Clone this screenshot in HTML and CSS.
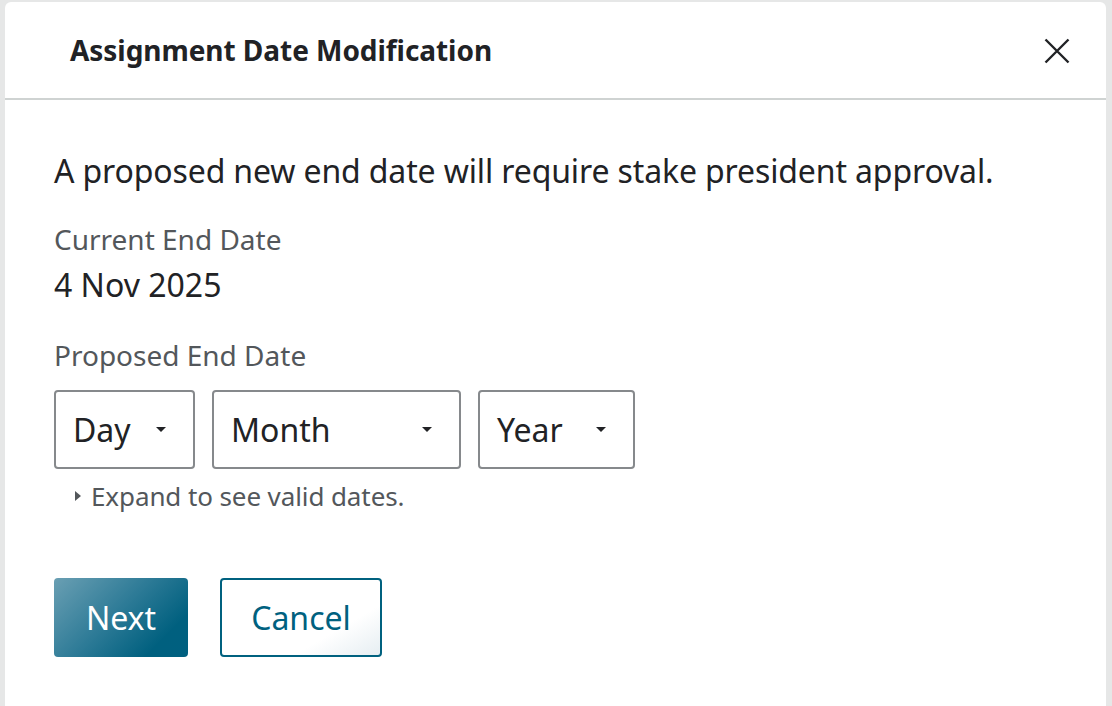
FILE: index.html
```html
<!DOCTYPE html>
<html lang="en">
<head>
<meta charset="utf-8">
<title>Assignment Date Modification</title>
<link rel="stylesheet" href="styles.css">
</head>
<body>
<div class="dialog">
  <header class="dialog-header">
    <h1 class="dialog-title">Assignment Date Modification</h1>
    <button class="close-btn" aria-label="Close">
      <svg width="26" height="26" viewBox="0 0 26 26"><path d="M1.5 1.5 L24.5 24.5 M24.5 1.5 L1.5 24.5" stroke="#212225" stroke-width="2.4" fill="none"/></svg>
    </button>
  </header>
  <main class="dialog-body">
    <p class="intro">A proposed new end date will require stake president approval.</p>
    <div class="field-label current">Current End Date</div>
    <div class="field-value">4 Nov 2025</div>
    <div class="field-label proposed">Proposed End Date</div>
    <div class="selects">
      <div class="select sel-day"><span>Day</span><span class="caret"></span></div>
      <div class="select sel-month"><span>Month</span><span class="caret"></span></div>
      <div class="select sel-year"><span>Year</span><span class="caret"></span></div>
    </div>
    <div class="expand"><span class="tri"></span>Expand to see valid dates.</div>
    <div class="actions">
      <button class="btn btn-primary">Next</button>
      <button class="btn btn-secondary">Cancel</button>
    </div>
  </main>
</div>
</body>
</html>
```
FILE: styles.css
```css
html, body {
  margin: 0;
  padding: 0;
  height: 100%;
  overflow: hidden;
}
body {
  background: #e6e7e7;
  font-family: "Noto Sans", "Open Sans", sans-serif;
  color: #212225;
}
.dialog {
  margin: 2px 6px 0 5px;
  background: #fff;
  border-radius: 6px 6px 0 0;
  height: 720px;
}
.dialog-header {
  height: 96px;
  border-bottom: 2px solid #cfd3d2;
  display: flex;
  align-items: center;
  justify-content: space-between;
  padding: 0 36px 0 65px;
}
.dialog-title {
  margin: 0;
  font-size: 28px;
  line-height: 38px;
  font-weight: 700;
  letter-spacing: -0.05px;
}
.close-btn {
  background: none;
  border: 0;
  padding: 0;
  width: 26px;
  height: 26px;
  display: flex;
  margin-top: 1px;
}
.dialog-body {
  padding: 49px 49px 0;
}
.intro {
  margin: 0;
  font-size: 32px;
  line-height: 44px;
  letter-spacing: -0.13px;
}
.field-label {
  font-size: 28px;
  line-height: 38px;
  color: #53575b;
}
.field-label.current {
  margin-top: 27px;
}
.field-value {
  margin-top: 5px;
  font-size: 32px;
  line-height: 44px;
}
.field-label.proposed {
  margin-top: 29px;
}
.selects {
  display: flex;
  gap: 17px;
  margin-top: 16px;
}
.select {
  box-sizing: border-box;
  height: 79px;
  border: 2px solid #86898c;
  border-radius: 4px;
  display: flex;
  align-items: center;
  justify-content: space-between;
  padding: 0 27px 0 17px;
  font-size: 32px;
}
.sel-day { width: 141px; }
.sel-month { width: 249px; }
.sel-year { width: 157px; }
.caret {
  width: 0;
  height: 0;
  border-left: 5.5px solid transparent;
  border-right: 5.5px solid transparent;
  border-top: 5.5px solid #212225;
  margin-bottom: 1px;
}
.expand {
  margin-top: 9px;
  margin-left: 21px;
  font-size: 26px;
  line-height: 36px;
  color: #53575b;
  display: flex;
  align-items: center;
  letter-spacing: -0.1px;
}
.tri {
  width: 0;
  height: 0;
  border-top: 5px solid transparent;
  border-bottom: 5px solid transparent;
  border-left: 6px solid #53575b;
  margin-right: 10px;
}
.actions {
  display: flex;
  gap: 32px;
  margin-top: 64px;
}
.btn {
  box-sizing: border-box;
  height: 79px;
  border-radius: 4px;
  font-family: "Noto Sans", "Open Sans", sans-serif;
  font-size: 32px;
  padding: 0;
}
.btn-primary {
  width: 134px;
  border: 0;
  color: #fff;
  background: linear-gradient(135deg, #6a9fb3 0%, #2e7b97 45%, #00607f 80%, #006080 100%);
}
.btn-secondary {
  width: 162px;
  border: 2px solid #00617f;
  color: #00617f;
  background: linear-gradient(150deg, #fff 0%, #fff 70%, #e6eef2 100%);
}
```
